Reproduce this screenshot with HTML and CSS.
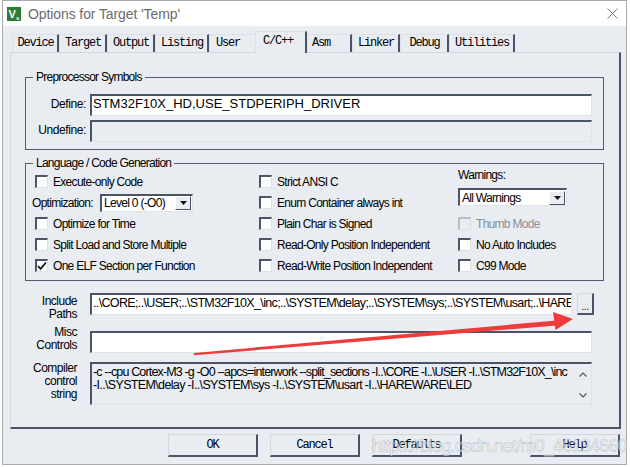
FILE: index.html
```html
<!DOCTYPE html>
<html>
<head>
<meta charset="utf-8">
<title>Options for Target 'Temp'</title>
<link rel="stylesheet" href="styles.css">
</head>
<body>
<div class="win">
  <div class="titlebar">
    <svg class="app-icon" width="14" height="14" viewBox="0 0 14 14"><rect width="14" height="14" fill="#2f7b35"/><text x="1.5" y="11" class="icon-v">V</text><text x="9" y="13" class="icon-s">s</text></svg>
    <span class="title">Options for Target 'Temp'</span>
    <svg class="close" width="11" height="11" viewBox="0 0 11 11"><path d="M0.5 0.5L10.5 10.5M10.5 0.5L0.5 10.5" stroke="#7a7a7a" stroke-width="1" fill="none"/></svg>
  </div>
  <div class="main">
    <div class="tabs">
      <div class="tab t-device">Device</div>
      <div class="tab t-target">Target</div>
      <div class="tab t-output">Output</div>
      <div class="tab t-listing">Listing</div>
      <div class="tab t-user">User</div>
      <div class="tab t-cc active">C/C++</div>
      <div class="tab t-asm">Asm</div>
      <div class="tab t-linker">Linker</div>
      <div class="tab t-debug">Debug</div>
      <div class="tab t-util">Utilities</div>
    </div>
    <div class="panel">
      <div class="group g-pre">
        <div class="legend">Preprocessor Symbols</div>
        <div class="sym-grid">
          <span class="lbl">Define:</span>
          <div class="field white">STM32F10X_HD,USE_STDPERIPH_DRIVER</div>
          <span class="lbl">Undefine:</span>
          <div class="field"></div>
        </div>
      </div>
      <div class="group g-lang">
        <div class="legend">Language / Code Generation</div>
        <div class="lang">
          <div class="col col1">
            <div class="cb-row"><span class="cb"></span>Execute-only Code</div>
            <div class="opt-row">
              <span class="opt-label">Optimization:</span>
              <div class="select sel-opt"><span class="val">Level 0 (-O0)</span><span class="drop"><svg width="7" height="4" viewBox="0 0 7 4"><path d="M0 0H7L3.5 4Z" fill="#111"/></svg></span></div>
            </div>
            <div class="cb-row"><span class="cb"></span>Optimize for Time</div>
            <div class="cb-row"><span class="cb"></span>Split Load and Store Multiple</div>
            <div class="cb-row"><span class="cb checked"><svg width="10" height="10" viewBox="0 0 10 10"><path d="M1 5L3.5 7.8L9 1.5" stroke="#111" stroke-width="1.8" fill="none"/></svg></span>One ELF Section per Function</div>
          </div>
          <div class="col col2">
            <div class="cb-row"><span class="cb"></span>Strict ANSI C</div>
            <div class="cb-row"><span class="cb"></span>Enum Container always int</div>
            <div class="cb-row"><span class="cb"></span>Plain Char is Signed</div>
            <div class="cb-row"><span class="cb"></span>Read-Only Position Independent</div>
            <div class="cb-row"><span class="cb"></span>Read-Write Position Independent</div>
          </div>
          <div class="col col3">
            <div class="warn-label">Warnings:</div>
            <div class="select sel-warn"><span class="val">All Warnings</span><span class="drop"><svg width="7" height="4" viewBox="0 0 7 4"><path d="M0 0H7L3.5 4Z" fill="#111"/></svg></span></div>
            <div class="cb-row disabled"><span class="cb"></span>Thumb Mode</div>
            <div class="cb-row"><span class="cb"></span>No Auto Includes</div>
            <div class="cb-row"><span class="cb"></span>C99 Mode</div>
          </div>
        </div>
      </div>
      <div class="paths">
        <span class="plbl l-inc">Include<br>Paths</span>
        <div class="inc-row">
          <div class="field white inc-field">..\CORE;..\USER;..\STM32F10X_\inc;..\SYSTEM\delay;..\SYSTEM\sys;..\SYSTEM\usart;..\HAREWARE\LED</div>
          <div class="dots-btn">...</div>
        </div>
        <span class="plbl l-misc">Misc<br>Controls</span>
        <div class="field white misc-field"></div>
        <span class="plbl l-ccs">Compiler<br>control<br>string</span>
        <div class="ccs">
          <div class="ccs-text"><span class="line1">-c --cpu Cortex-M3 -g -O0 --apcs=interwork --split_sections -I..\CORE -I..\USER -I..\STM32F10X_\inc</span><br>-I..\SYSTEM\delay -I..\SYSTEM\sys -I..\SYSTEM\usart -I..\HAREWARE\LED</div>
          <div class="vscroll">
            <svg width="8" height="5" viewBox="0 0 8 5"><path d="M0.5 4.5L4 1L7.5 4.5" stroke="#555" stroke-width="1.2" fill="none"/></svg>
            <svg width="8" height="5" viewBox="0 0 8 5"><path d="M0.5 0.5L4 4L7.5 0.5" stroke="#555" stroke-width="1.2" fill="none"/></svg>
          </div>
        </div>
      </div>
    </div>
    <div class="btns">
      <div class="btn">OK</div>
      <div class="btn">Cancel</div>
      <div class="btn">Defaults</div>
      <div class="btn help">Help</div>
    </div>
  </div>
</div>
<svg class="arrow" width="630" height="467" viewBox="0 0 630 467">
  <polygon points="194,353 194,355.2 557,325.5 556.5,320.5" fill="#ef3b3b"/>
  <polygon points="553,312 573,319 555.5,330" fill="#ef3b3b"/>
</svg>
<div class="watermark">https://blog.csdn.net/m0_46134660</div>
</body>
</html>
```

FILE: styles.css
```css
* { box-sizing: border-box; }
html, body { margin: 0; padding: 0; }
body {
  width: 630px;
  height: 467px;
  overflow: hidden;
  position: relative;
  background: #ffffff;
  font-family: "Liberation Sans", Arial, sans-serif;
  font-size: 12px;
  color: #000;
}
.win {
  margin-left: 2px;
  width: 625px;
  height: 465px;
  border: 1px solid #a9a9a9;
  display: flex;
  flex-direction: column;
  background: #e9edf2;
}
.titlebar {
  height: 25px;
  flex: none;
  background: #ffffff;
  display: flex;
  align-items: center;
}
.app-icon { margin-left: 4px; flex: none; }
.icon-v { font-family: "Liberation Sans", sans-serif; font-weight: bold; font-size: 11px; fill: #ffffff; }
.icon-s { font-family: "Liberation Sans", sans-serif; font-weight: bold; font-size: 6px; fill: #ffffff; }
.title {
  margin-left: 7px;
  font-size: 14px;
  letter-spacing: -0.1px;
  color: #6b6b6b;
}
.close { margin-left: auto; margin-right: 8px; }

.main { flex: 1; display: flex; flex-direction: column; }

.tabs {
  height: 26px;
  flex: none;
  display: flex;
  align-items: flex-end;
  padding-left: 9px;
}
.tab {
  height: 18px;
  font-family: "Liberation Mono", "DejaVu Sans Mono", monospace;
  font-size: 12px;
  letter-spacing: -1.2px;
  line-height: 17px;
  border-top: 1px solid #dde1e7;
  border-left: 1px solid #dde1e7;
  border-right: 2px solid #4a5367;
  text-align: center;
  padding-left: 1px;
}
.t-device { width: 47px; }
.t-target { width: 48px; }
.t-output { width: 48px; }
.t-listing { width: 54px; }
.t-user { width: 46px; border-right: none; text-align: left; padding-left: 6px; }
.t-cc { width: 52px; text-align: left; padding-left: 7px; }
.t-asm { width: 45px; text-align: left; padding-left: 4px; }
.t-linker { width: 48px; }
.t-debug { width: 49px; }
.t-util { width: 66px; }
.tab.active {
  height: 22px;
  line-height: 19px;
  margin-bottom: -1px;
  background: #e9edf2;
  position: relative;
  z-index: 1;
}

.panel {
  margin-left: 7px;
  width: 611px;
  height: 377px;
  flex: none;
  border-top: 1px solid #d3d8de;
  border-left: 1px solid #d3d8de;
  border-right: 2px solid #4a5367;
  border-bottom: 2px solid #4a5367;
  display: flex;
  flex-direction: column;
}

.group {
  border: 1px solid #505a70;
  margin: 0 15px 0 14px;
}
.g-pre { margin-top: 24px; }
.g-lang { margin-top: 13px; }
.legend {
  width: fit-content;
  margin: -8px 0 0 7px;
  padding: 0 3px;
  height: 14px;
  line-height: 14px;
  background: #e9edf2;
  letter-spacing: -0.75px;
  font-size: 12px;
}

.sym-grid {
  display: grid;
  grid-template-columns: 60px 1fr;
  column-gap: 4px;
  row-gap: 4px;
  margin-top: 10px;
  padding-right: 11px;
  padding-bottom: 7px;
}
.lbl {
  text-align: right;
  align-self: center;
  letter-spacing: -0.4px;
  line-height: 14px;
  margin-top: -2px;
}
.field {
  height: 22px;
  border-top: 2px solid #4a5367;
  border-left: 2px solid #4a5367;
  border-right: 1px solid #dfe2e6;
  border-bottom: 1px solid #dfe2e6;
  background: #e9edf2;
  font-size: 13px;
  line-height: 16px;
  padding-left: 1px;
  white-space: nowrap;
  overflow: hidden;
}
.field.white { background: #ffffff; }

.lang {
  display: grid;
  grid-template-columns: 227px 199px 1fr;
  margin-top: 1px;
  padding-left: 6px;
  padding-bottom: 4px;
}
.col { display: flex; flex-direction: column; }
.cb-row {
  height: 21px;
  display: flex;
  align-items: center;
  letter-spacing: -0.7px;
  white-space: nowrap;
}
.col1 .cb-row { padding-left: 3px; }
.cb {
  width: 13px;
  height: 13px;
  flex: none;
  margin-right: 5px;
  border-top: 2px solid #4d5669;
  border-left: 2px solid #4d5669;
  border-right: 1px solid #dde1e6;
  border-bottom: 1px solid #dde1e6;
  background: #ffffff;
  display: flex;
  align-items: center;
  justify-content: center;
}
.cb svg { margin: -1px 0 0 -1px; }
.cb-row.disabled { color: #8b9099; }
.cb-row.disabled .cb {
  background: #e9edf2;
  border-top-color: #b9bec6;
  border-left-color: #b9bec6;
}

.opt-row { height: 21px; display: flex; align-items: center; }
.opt-label { width: 68px; letter-spacing: -0.7px; white-space: nowrap; }
.select {
  height: 18px;
  display: flex;
  align-items: center;
  border-top: 2px solid #4a5367;
  border-left: 2px solid #4a5367;
  border-right: 1px solid #dfe2e6;
  border-bottom: 1px solid #dfe2e6;
  background: #ffffff;
}
.select .val { flex: 1; padding-left: 2px; letter-spacing: -0.7px; white-space: nowrap; }
.sel-opt { width: 93px; }
.sel-warn { width: 109px; margin-top: 6px; margin-bottom: 7px; }
.drop {
  width: 16px;
  height: 14px;
  flex: none;
  margin-right: 1px;
  background: #e9edf2;
  border-top: 1px solid #ffffff;
  border-left: 1px solid #ffffff;
  border-right: 1px solid #4a5367;
  border-bottom: 1px solid #4a5367;
  display: flex;
  align-items: center;
  justify-content: center;
}
.warn-label {
  height: 14px;
  line-height: 14px;
  margin-top: -3px;
  letter-spacing: -0.7px;
}

.paths {
  display: grid;
  grid-template-columns: 66px 502px;
  column-gap: 13px;
  margin-top: 12px;
}
.plbl {
  text-align: right;
  line-height: 13px;
  letter-spacing: -0.5px;
}
.l-inc { padding-top: 2px; }
.l-misc { margin-top: 5px; margin-bottom: -3px; }
.l-ccs { margin-top: 9px; padding-top: 0; }
.inc-row { display: flex; }
.inc-field { width: 482px; flex: none; }
.inc-field, .ccs-text {
  font-size: 12.5px;
  letter-spacing: -0.65px;
}
.ccs-text .line1 { letter-spacing: -0.85px; }
.dots-btn {
  width: 17px;
  height: 22px;
  flex: none;
  margin-left: 5px;
  border-top: 1px solid #d3d8de;
  border-left: 1px solid #d3d8de;
  border-right: 2px solid #4a5367;
  border-bottom: 2px solid #4a5367;
  font-size: 10px;
  line-height: 10px;
  text-align: center;
  padding-top: 8px;
  letter-spacing: -0.5px;
}
.misc-field { margin-top: 10px; }
.ccs {
  margin-top: 9px;
  height: 43px;
  display: flex;
  border-top: 2px solid #4a5367;
  border-left: 2px solid #4a5367;
  border-right: 1px solid #dfe2e6;
  border-bottom: 1px solid #dfe2e6;
  background: #e9edf2;
}
.ccs-text {
  flex: 1;
  line-height: 13px;
  padding: 2px 0 0 1px;
  white-space: nowrap;
  overflow: hidden;
}
.vscroll {
  width: 17px;
  flex: none;
  display: flex;
  flex-direction: column;
  justify-content: space-between;
  align-items: center;
  padding: 8px 0 6px;
}

.btns {
  display: flex;
  margin-top: 5px;
  padding-left: 165px;
  padding-right: 6px;
  gap: 12px;
}
.btn {
  width: 90px;
  height: 23px;
  border-top: 1px solid #d3d8de;
  border-left: 1px solid #d3d8de;
  border-right: 2px solid #4a5367;
  border-bottom: 2px solid #4a5367;
  font-family: "Liberation Mono", "DejaVu Sans Mono", monospace;
  font-size: 12px;
  letter-spacing: -1.2px;
  line-height: 20px;
  text-align: center;
}
.btn.help { margin-left: auto; }

.arrow {
  position: absolute;
  left: 0;
  top: 0;
  pointer-events: none;
}
.watermark {
  position: absolute;
  left: 372px;
  top: 435px;
  font-family: "Liberation Sans", Arial, sans-serif;
  font-size: 18px;
  line-height: 22px;
  letter-spacing: -0.8px;
  color: rgba(255, 255, 255, 0.55);
  -webkit-text-stroke: 0.6px rgba(150, 155, 162, 0.55);
  white-space: nowrap;
  pointer-events: none;
}
```
